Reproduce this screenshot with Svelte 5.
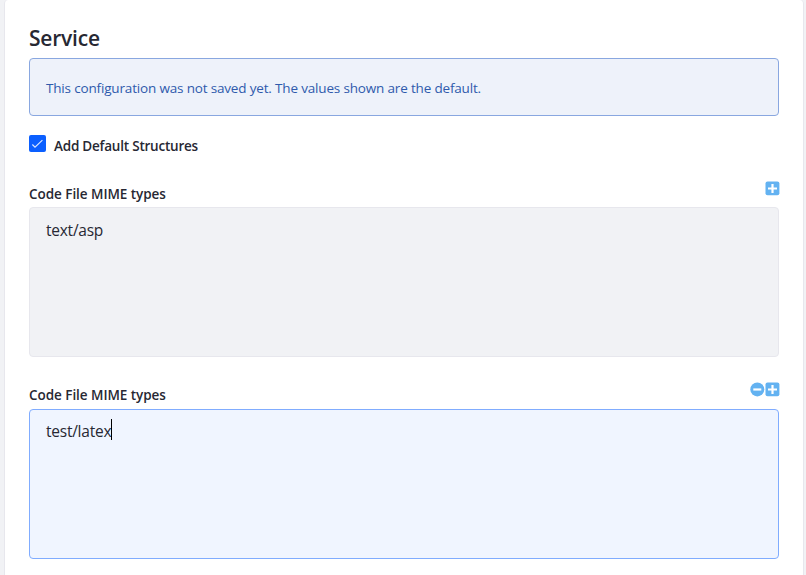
<script>
  const fields = [
    { value: 'text/asp', removable: false, focused: false },
    { value: 'test/latex', removable: true, focused: true }
  ];
</script>

<main class="page">
  <section class="sheet">
    <h2><span>Service</span></h2>
    <div class="alert"><span>This configuration was not saved yet. The values shown are the default.</span></div>

    <div class="check">
      <span class="box" role="checkbox" aria-checked="true" aria-label="Add Default Structures" tabindex="0">
        <svg width="17" height="17" viewBox="0 0 17 17"><path d="M3.4 9.5 6 12.1 13.4 5.2" /></svg>
      </span>
      <span class="label check-label">Add Default Structures</span>
    </div>

    {#each fields as field}
      <div class="field">
        <div class="head">
          <span class="label">Code File MIME types</span>
          <div class="actions">
            {#if field.removable}
              <svg width="15" height="15" viewBox="0 0 15 15">
                <circle cx="7.3" cy="7.4" r="7" fill="#63b2f1" />
                <path d="M3.3 7.5h8" stroke="#fff" stroke-width="2.2" />
              </svg>
            {/if}
            <svg width="15" height="15" viewBox="0 0 15 15">
              <rect x=".5" y=".6" width="13.9" height="13.7" rx="2" fill="#63b2f1" />
              <path d="M3 7.5h9M7.5 3v9" stroke="#fff" stroke-width="2.2" />
            </svg>
          </div>
        </div>
        <div class="area" class:focused={field.focused}>
          <span class="value">{field.value}</span>{#if field.focused}<i class="caret"></i>{/if}
        </div>
      </div>
    {/each}
  </section>
</main>

<style>
  :global(body) { background: #f1f2f5; }
  .page {
    box-sizing: border-box;
    height: 575px;
    overflow: hidden;
    padding: 0 2px 0 4px;
    font-family: "Open Sans", "Noto Sans", sans-serif;
    color: #272833;
  }
  .sheet {
    box-sizing: border-box;
    height: 620px;
    padding: 22px 24px 0;
    background: #fff;
    border: 1px solid #e7e7ed;
    border-top: 0;
    border-radius: 4px;
  }
  h2 {
    margin: 0 0 4px;
    font-size: 21px;
    line-height: 32px;
    font-weight: 600;
    letter-spacing: -0.22px;
  }
  .alert {
    box-sizing: border-box;
    height: 58px;
    padding: 0 16px;
    border: 1px solid #89a7e0;
    border-radius: 4px;
    background: #eef2fa;
    color: #2e5aac;
    font-size: 13.5px;
    line-height: 58px;
    letter-spacing: -0.17px;
    white-space: nowrap;
  }
  .check {
    display: flex;
    gap: 8px;
    height: 21px;
    margin: 19px 0 21px;
  }
  .box {
    width: 17px;
    height: 17px;
    border-radius: 2px;
    background: #0b5fff;
  }
  .box svg { display: block; }
  .box path { fill: none; stroke: #dce8ff; stroke-width: 1.15; }
  .label {
    font-size: 13.5px;
    line-height: 21px;
    font-weight: 600;
    letter-spacing: -0.05px;
    white-space: nowrap;
  }
  .check-label { padding-top: 1px; letter-spacing: -0.22px; }
  .field { margin-bottom: 21px; }
  .head {
    display: flex;
    justify-content: space-between;
    height: 30px;
  }
  .field + .field .head { height: 31px; }
  .head .label { padding-top: 7px; }
  .actions { display: flex; height: 15px; padding-top: 4px; margin-right: -1px; }
  .area {
    box-sizing: border-box;
    display: flex;
    height: 150px;
    padding: 10px 16px;
    border: 1px solid #e7e7ed;
    border-radius: 4px;
    background: #f1f2f5;
    font-size: 15.5px;
    line-height: 24px;
    letter-spacing: -0.24px;
  }
  .area.focused { padding-top: 9px; background: #f0f5ff; border-color: #80acff; }
  .caret { width: 1px; height: 21px; background: #000; }
</style>
